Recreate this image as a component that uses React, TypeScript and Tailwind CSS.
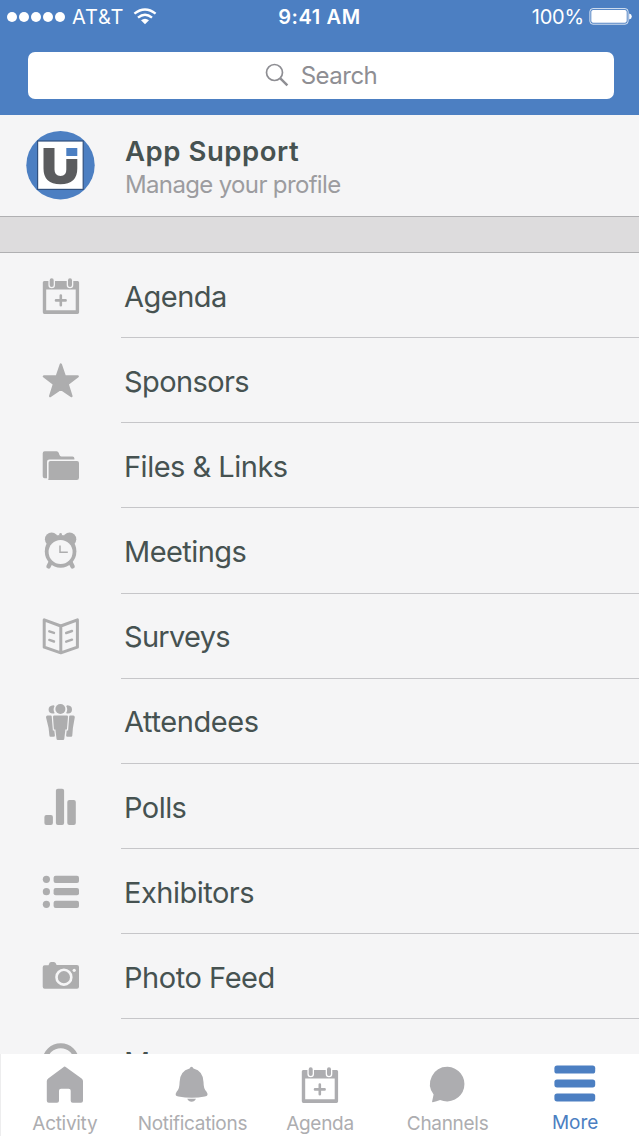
import type { ReactNode } from "react";

interface MenuItem {
  label: string;
  tracking: string;
  icon: ReactNode;
}

interface Tab {
  label: string;
  icon: ReactNode;
  active?: boolean;
}

const CalendarIcon = ({ gap }: { gap: string }) => (
  <>
    <path
      fillRule="evenodd"
      d="M3.4 5H36.6a1.5 1.5 0 0 1 1.5 1.5V36.3a1.6 1.6 0 0 1-1.6 1.6H3.4a1.6 1.6 0 0 1-1.6-1.6V6.5A1.5 1.5 0 0 1 3.4 5ZM5.2 13.6V34.3H34.7V13.6Z"
    />
    <path
      stroke={gap}
      strokeWidth="6.6"
      strokeLinecap="round"
      d="M10.7 3.8V9M29 3.8V9"
    />
    <path
      stroke="currentColor"
      strokeWidth="4"
      strokeLinecap="round"
      d="M10.7 4.3V9M29 4.3V9"
    />
    <path
      stroke="currentColor"
      strokeWidth="2.6"
      strokeLinecap="round"
      d="M15 24.4H24.6M19.8 19.6V29.2"
    />
  </>
);

const menuItems: MenuItem[] = [
  {
    label: "Agenda",
    tracking: "tracking-[-0.5px]",
    icon: <CalendarIcon gap="#f5f5f6" />,
  },
  {
    label: "Sponsors",
    tracking: "tracking-[-0.6px]",
    icon: (
      <path
        stroke="currentColor"
        strokeWidth="2.4"
        strokeLinejoin="round"
        d="M19.8 3.6 23.8 15.4H36.7L26.6 23 30.4 35.1 19.8 27.8 9.2 35.1 13 23 2.9 15.4H15.8Z"
      />
    ),
  },
  {
    label: "Files & Links",
    tracking: "tracking-[-0.5px]",
    icon: (
      <>
        <path d="M3.7 5.3H15.5Q17.2 5.3 17.8 7L18.4 8.8Q18.8 10.4 20.4 10.4H31.5Q33.4 10.4 33.4 12.4V13.4H8.4Q6 13.4 6 15.8V32.2H3.7Q1.7 32.2 1.7 30.2V7.3Q1.7 5.3 3.7 5.3Z" />
        <path d="M9.4 15H36Q38 15 38 17V31.8Q38 34 35.8 34H7.2Q7.6 32.8 7.6 31.8V16.8Q7.6 15 9.4 15Z" />
      </>
    ),
  },
  {
    label: "Meetings",
    tracking: "tracking-[-0.55px]",
    icon: (
      <>
        <path
          stroke="currentColor"
          strokeWidth="4.4"
          strokeLinecap="round"
          d="M9.5 31.5 7.5 35.4M29.6 31.5 31.6 35.4"
        />
        <circle cx="10.6" cy="8.2" r="6.7" />
        <circle cx="28.6" cy="8.2" r="6.7" />
        <ellipse cx="19.6" cy="20.3" rx="15.8" ry="16.4" />
        <circle className="fill-[#f5f5f6]" cx="19.6" cy="20.9" r="12" />
        <circle cx="19.6" cy="3.2" r="1.3" />
        <path
          stroke="currentColor"
          strokeWidth="1.5"
          fill="none"
          d="M19 14.4V21.2H26.8"
        />
      </>
    ),
  },
  {
    label: "Surveys",
    tracking: "tracking-[-0.7px]",
    icon: (
      <>
        <path
          fill="none"
          stroke="currentColor"
          strokeWidth="3"
          strokeLinejoin="round"
          d="M3.2 2.8 19.8 9 36.4 2.8V30.2L19.8 35.8 3.2 30.2ZM19.8 9V35.8"
        />
        <path
          fill="none"
          stroke="currentColor"
          strokeWidth="2.4"
          strokeLinecap="round"
          d="M8.3 14.3 13 15.9M8.3 22.9 13 24.5M25.2 16 31 14M25.2 24.7 31 22.7"
        />
      </>
    ),
  },
  {
    label: "Attendees",
    tracking: "tracking-[-0.4px]",
    icon: (
      <>
        <path d="M12.4 3.3Q7.6 3.6 7.6 7.6T12.2 11.5Q13 11.6 13.6 11Q11.6 7.5 13.6 4Q13 3.3 12.4 3.3ZM26.6 3.3Q31 3.6 31 7.6T26.8 11.5Q26 11.6 25.2 11Q27.2 7.5 25.2 4Q26 3.3 26.6 3.3Z" />
        <circle cx="19.4" cy="7" r="5" />
        <path d="M13.2 13.4H25.8Q27 13.4 27 14.8L25.9 27.4H24.4L23.3 36.8Q23.2 38 22 38H16.8Q15.6 38 15.5 36.8L14.4 27.4H12.9L12 14.8Q12 13.4 13.2 13.4Z" />
        <path d="M6.5 13.4H9.8Q10.6 13.4 10.7 14.2L11.9 28.6H13.3L13.9 33.6Q13.9 34.8 12.6 34.8H9.6Q8.5 34.8 8.4 33.5L7.6 26 5 15.2Q5 13.4 6.5 13.4ZM29 13.4H32.3Q33.8 13.4 33.8 15.2L31.9 26 31.3 33.5Q31.2 34.8 30.1 34.8H26.4Q25.1 34.8 25.1 33.6L25.7 28.6H27.1L28.2 14.2Q28.3 13.4 29 13.4Z" />
      </>
    ),
  },
  {
    label: "Polls",
    tracking: "tracking-[-0.55px]",
    icon: (
      <>
        <rect x="3.4" y="28" width="8.5" height="10" rx="2" />
        <rect x="14.9" y="1.8" width="8.2" height="36.2" rx="2" />
        <rect x="26.3" y="13" width="8.5" height="25" rx="2" />
      </>
    ),
  },
  {
    label: "Exhibitors",
    tracking: "tracking-[-0.5px]",
    icon: (
      <>
        <circle cx="5.4" cy="7.3" r="3.6" />
        <circle cx="5.4" cy="19.7" r="3.6" />
        <circle cx="5.4" cy="32.3" r="3.6" />
        <rect x="12.6" y="3.7" width="25.4" height="7.2" rx="2" />
        <rect x="12.6" y="16.1" width="25.4" height="7.2" rx="2" />
        <rect x="12.6" y="28.7" width="25.4" height="7.2" rx="2" />
      </>
    ),
  },
  {
    label: "Photo Feed",
    tracking: "tracking-[-0.45px]",
    icon: (
      <>
        <path d="M3.7 8.3H7.5Q8.4 5.1 10 5.1H13Q14.6 5.1 15.6 8H36Q38 8 38 10V29.8Q38 31.8 36 31.8H3.7Q1.7 31.8 1.7 29.8V10.3Q1.7 8.3 3.7 8.3Z" />
        <circle
          className="stroke-[#f5f5f6]"
          fill="none"
          strokeWidth="2.6"
          cx="22.9"
          cy="20.2"
          r="7.4"
        />
        <circle className="fill-[#f5f5f6]" cx="33.2" cy="13.3" r="1.6" />
      </>
    ),
  },
  {
    label: "Maps",
    tracking: "tracking-[-0.5px]",
    icon: (
      <ellipse
        fill="none"
        stroke="currentColor"
        strokeWidth="5"
        cx="19.7"
        cy="18.2"
        rx="15.4"
        ry="14.4"
      />
    ),
  },
];

const tabs: Tab[] = [
  {
    label: "Activity",
    icon: (
      <path d="M19.5 1.6Q20.3 1.6 21 2.2L36.6 13.6Q38 14.7 38 16V35.8Q38 37.8 36 37.8H27.7Q25.7 37.8 25.7 35.8V25.8Q25.7 23.8 23.7 23.8H16Q14 23.8 14 25.8V35.8Q14 37.8 12 37.8H3.8Q1.8 37.8 1.8 35.8V16Q1.8 14.7 3.2 13.6L18.4 2.2Q19 1.6 19.5 1.6Z" />
    ),
  },
  {
    label: "Notifications",
    icon: (
      <>
        <path d="M19.5 1.8Q20.8 1.8 21.5 3.4Q31.3 6 31.5 17Q31.6 24.5 34.4 26.4Q37.4 30.6 32.8 31.6Q20 34 6.4 31.6Q1.8 30.6 4.8 26.4Q7.5 24.5 7.6 17Q7.8 6 17.6 3.4Q18.3 1.8 19.5 1.8Z" />
        <path d="M15.2 33.8H24Q22.6 36.8 19.6 36.8T15.2 33.8Z" />
      </>
    ),
  },
  { label: "Agenda", icon: <CalendarIcon gap="#ffffff" /> },
  {
    label: "Channels",
    icon: (
      <path d="M19.6 1.8A17.3 17.3 0 1 1 12.1 34.9Q8.5 36.2 4.7 37.3Q3.9 37.4 4.1 36.5L5.6 29.6A17.3 17.3 0 0 1 19.6 1.8Z" />
    ),
  },
  {
    label: "More",
    active: true,
    icon: (
      <>
        <rect x="-0.6" y="0.6" width="40.8" height="8" rx="2.6" />
        <rect x="-0.6" y="14.4" width="40.8" height="8" rx="2.6" />
        <rect x="-0.6" y="28.4" width="40.8" height="8" rx="2.6" />
      </>
    ),
  },
];

const StatusBar = () => (
  <div className="grid h-[34px] grid-cols-3 items-center px-[7px] text-[20px] text-white">
    <div className="flex items-center">
      <div className="flex gap-[2px]">
        {[1, 2, 3, 4, 5].map((dot) => (
          <span key={dot} className="h-[10px] w-[10px] rounded-full bg-white" />
        ))}
      </div>
      <span className="ml-[7px] tracking-[0.8px]">AT&amp;T</span>
      <svg className="ml-[9px]" width="24" height="18" viewBox="0 0 24 18">
        <path
          fill="none"
          stroke="#fff"
          strokeWidth="2.4"
          d="M1.4 5.6Q12 -2.8 22.6 5.6M5 9.7Q12 3.8 19 9.7"
        />
        <path fill="#fff" d="M8 12.3Q12 9 16 12.3L12 16.3Z" />
      </svg>
    </div>
    <span className="text-center font-semibold tracking-[0.6px]">9:41 AM</span>
    <div className="flex items-center justify-end">
      <span className="tracking-[-0.2px]">100%</span>
      <svg className="ml-[5px]" width="43" height="18" viewBox="0 0 43 18">
        <rect
          x="0.9"
          y="0.6"
          width="38.2"
          height="15.6"
          rx="3"
          fill="none"
          stroke="#fff"
          strokeWidth="0.8"
        />
        <rect x="2.3" y="2" width="35.4" height="12.8" rx="1.8" fill="#fff" />
        <path fill="#fff" d="M40.2 5.6Q42.8 6 42.8 8.5T40.2 11.4Z" />
      </svg>
    </div>
  </div>
);

const App = () => {
  return (
    <div className="flex h-[1136px] w-[639px] flex-col overflow-hidden bg-[#f5f5f6] font-['Inter','Liberation_Sans',sans-serif]">
      <header className="h-[115px] shrink-0 bg-[#4c7fc2]">
        <StatusBar />
        <div className="ml-[28px] mt-[17.5px] flex h-[47.5px] w-[586px] items-center justify-center rounded-[7px] bg-white text-[#8e8e93]">
          <svg
            width="24"
            height="24"
            viewBox="0 0 24 24"
            fill="none"
            stroke="currentColor"
          >
            <circle cx="9.5" cy="9.5" r="8" strokeWidth="1.7" />
            <path d="M15.3 15.3 22.4 22.4" strokeWidth="2.4" />
          </svg>
          <span className="ml-3 pt-[2px] text-[24px] tracking-[-0.5px]">
            Search
          </span>
        </div>
      </header>

      <section className="flex h-[101px] shrink-0 items-center pl-[26px]">
        <svg width="69" height="69" viewBox="0 0 69 69">
          <circle cx="34.5" cy="34.2" r="34.2" fill="#4c7fc2" />
          <rect
            x="11.6"
            y="10"
            width="45.6"
            height="48.4"
            fill="#fff"
            stroke="#31517f"
            strokeWidth="1.2"
          />
          <path
            fill="#5b5c5e"
            d="M17.5 17H28.5V38.5Q28.5 45 34.5 45T40.3 38.5V28H51.3V37.5Q51.3 53.3 34.4 53.3T17.5 37.5Z"
          />
          <rect x="40.3" y="17" width="11" height="8" fill="#4c7fc2" />
        </svg>
        <div className="ml-[30px] flex flex-col pt-[5px]">
          <span className="text-[27.5px] font-semibold leading-[34px] tracking-[0.55px] text-[#465251]">
            App Support
          </span>
          <span className="text-[24px] leading-[34px] tracking-[-0.65px] text-[#9c9c9f]">
            Manage your profile
          </span>
        </div>
      </section>

      <div className="h-[37px] shrink-0 border-y border-[#b0b0b2] bg-[#dddcdd]" />

      <ul className="min-h-0 flex-1 overflow-hidden">
        {menuItems.map(({ label, tracking, icon }) => (
          <li key={label} className="flex h-[85.13px]">
            <div className="flex w-[121px] shrink-0 items-center pl-[41px] pt-px text-[#adadae]">
              <svg
                width="40"
                height="40"
                viewBox="0 0 40 40"
                fill="currentColor"
              >
                {icon}
              </svg>
            </div>
            <div className="flex flex-1 items-center border-b border-[#c6c6c9] pl-[3px] pt-[3px]">
              <span className={`text-[29px] text-[#465251] ${tracking}`}>
                {label}
              </span>
            </div>
          </li>
        ))}
      </ul>

      <nav className="grid h-[82px] shrink-0 grid-cols-5 border-l border-[#ededee] bg-white">
        {tabs.map(({ label, icon, active }) => (
          <button
            key={label}
            className={`flex flex-col items-center pt-[11px] ${
              active ? "text-[#4c7fc2]" : "text-[#adadb0]"
            }`}
          >
            <svg
              className="shrink-0 overflow-visible"
              width="40"
              height="40"
              viewBox="0 0 40 40"
              fill="currentColor"
            >
              {icon}
            </svg>
            <span
              className={`text-[19px] leading-[24px] ${
                active ? "mt-[6px]" : "mt-[7px] tracking-[-0.3px]"
              }`}
            >
              {label}
            </span>
          </button>
        ))}
      </nav>
    </div>
  );
};

export default App;
